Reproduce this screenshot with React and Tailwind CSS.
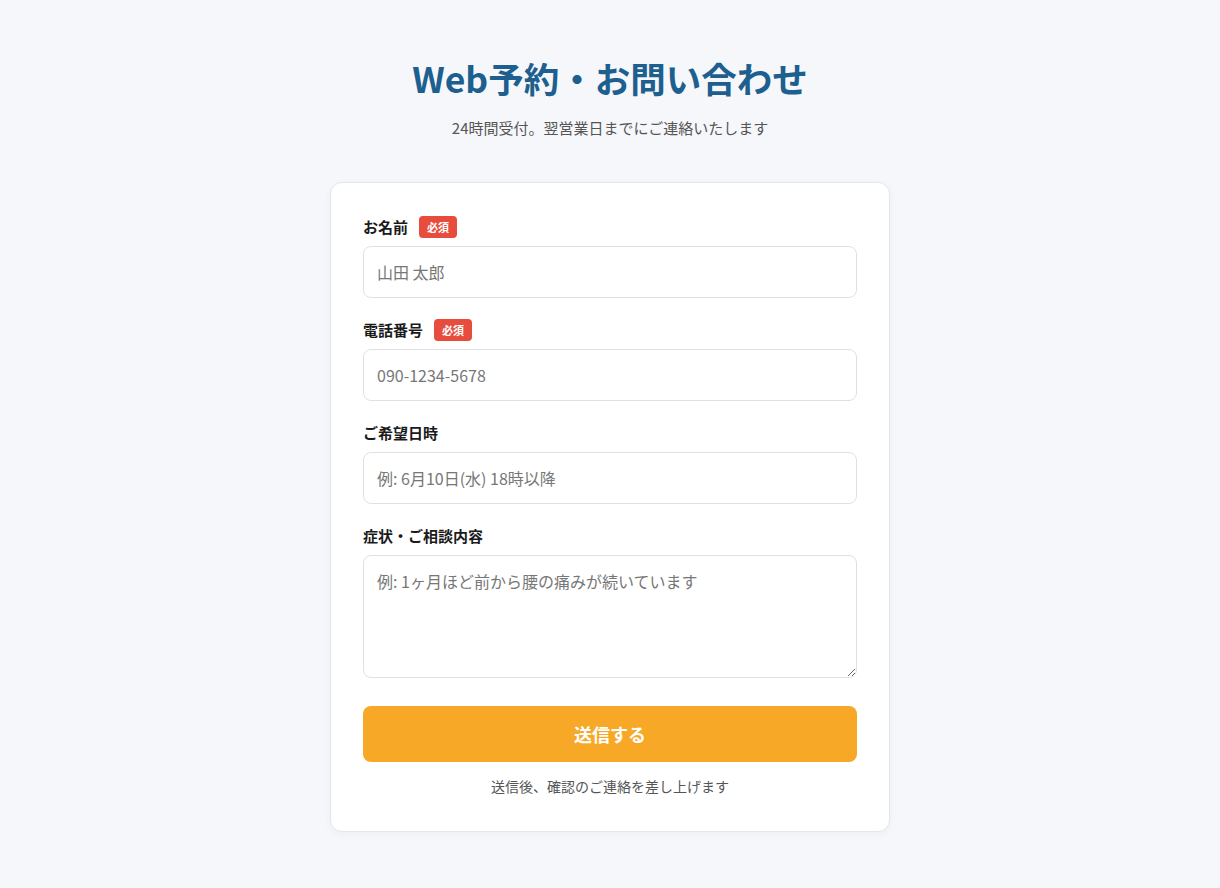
export default function App() {
  const font = { fontFamily: '"Noto Sans CJK JP", "Noto Sans", sans-serif' }
  return (
    <div
      className="min-h-screen bg-[#f5f7fa] px-4 pt-[57px] pb-14 font-['Noto_Sans_CJK_JP',sans-serif]"
      style={font}
    >
      <div className="mx-auto max-w-[560px]">
        <h1 className="text-center text-[35.5px] font-bold leading-[1.2] text-[#1d5f8e]">
          Web予約・お問い合わせ
        </h1>
        <p className="mt-[17px] text-center text-[15px] text-[#555]">
          24時間受付。翌営業日までにご連絡いたします
        </p>

        <form className="mt-[43px] rounded-xl border border-[#e3e6ea] bg-white px-8 pt-8 pb-[34px] shadow-[0_2px_8px_rgba(0,0,0,0.04)]">
          {/* お名前 */}
          <div className="mb-5">
            <label className="mb-[7px] flex h-6 items-center gap-[11px] text-[15px] font-bold text-[#1a1a1a]">
              お名前
              <span className="rounded-[4px] bg-[#e74c3c] px-[8px] text-[11px] font-bold leading-[22px] text-white">
                必須
              </span>
            </label>
            <input
              type="text"
              placeholder="山田 太郎"
              className="h-[52px] w-full rounded-lg border border-[#dde1e6] px-[13px] text-[16px] text-[#333] placeholder:text-[#777] focus:outline-none"
            />
          </div>

          {/* 電話番号 */}
          <div className="mb-5">
            <label className="mb-[7px] flex h-6 items-center gap-[11px] text-[15px] font-bold text-[#1a1a1a]">
              電話番号
              <span className="rounded-[4px] bg-[#e74c3c] px-[8px] text-[11px] font-bold leading-[22px] text-white">
                必須
              </span>
            </label>
            <input
              type="tel"
              placeholder="090-1234-5678"
              className="h-[52px] w-full rounded-lg border border-[#dde1e6] px-[13px] text-[16px] text-[#333] placeholder:text-[#777] focus:outline-none"
            />
          </div>

          {/* ご希望日時 */}
          <div className="mb-5">
            <label className="mb-[7px] flex h-6 items-center text-[15px] font-bold text-[#1a1a1a]">
              ご希望日時
            </label>
            <input
              type="text"
              placeholder="例: 6月10日(水) 18時以降"
              className="h-[52px] w-full rounded-lg border border-[#dde1e6] px-[13px] text-[16px] text-[#333] placeholder:text-[#777] focus:outline-none"
            />
          </div>

          {/* 症状・ご相談内容 */}
          <div className="mb-[28px]">
            <label className="mb-[7px] flex h-6 items-center text-[15px] font-bold text-[#1a1a1a]">
              症状・ご相談内容
            </label>
            <textarea
              placeholder="例: 1ヶ月ほど前から腰の痛みが続いています"
              className="block h-[123px] w-full rounded-lg border border-[#dde1e6] px-[13px] py-[13px] text-[16px] text-[#333] placeholder:text-[#777] focus:outline-none"
            />
          </div>

          <button
            type="button"
            className="h-[56px] w-full rounded-lg bg-[#f7a826] text-[18px] font-bold text-white"
          >
            送信する
          </button>
          <p className="mt-[14px] text-center text-[14px] text-[#555]">
            送信後、確認のご連絡を差し上げます
          </p>
        </form>
      </div>
    </div>
  )
}
